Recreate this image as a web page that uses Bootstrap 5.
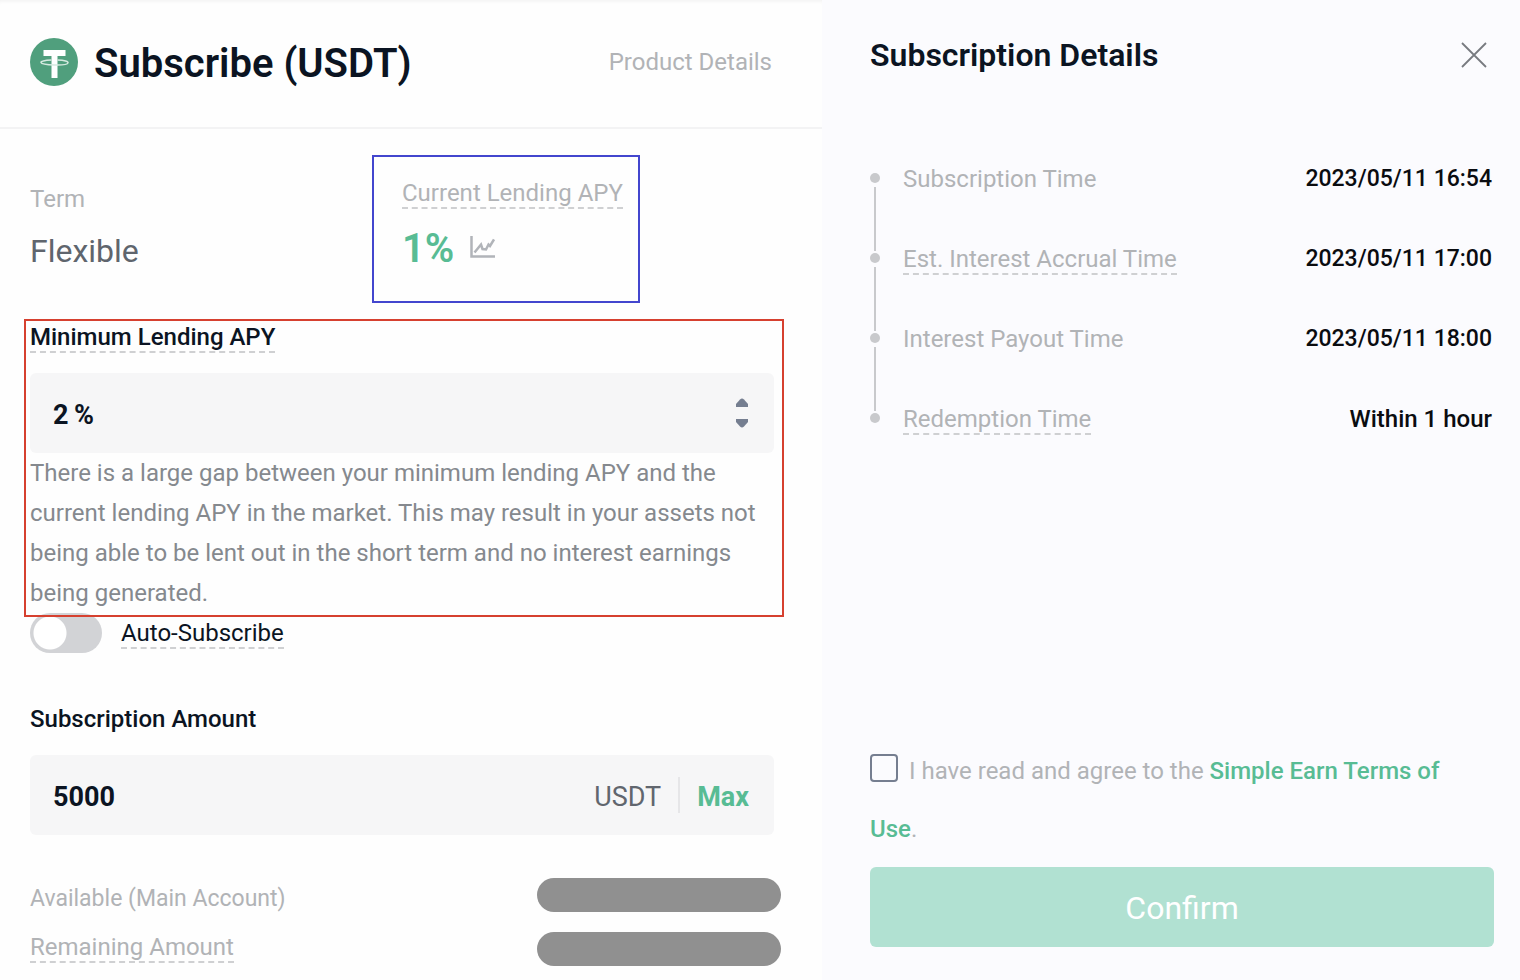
<!DOCTYPE html>
<html lang="en">
<head>
<meta charset="utf-8">
<meta name="viewport" content="width=device-width, initial-scale=1">
<title>Subscribe (USDT)</title>
<link href="https://cdn.jsdelivr.net/npm/bootstrap@5.3.0/dist/css/bootstrap.min.css" rel="stylesheet">
<style>
  :root { --green: #58bc94; --ink: #0b1422; --muted-ink: #b1b3b6; --rule: #c8c9cc; }
  body { font-family: Roboto, "Liberation Sans", sans-serif; font-size: 24px; line-height: 40px; color: var(--ink); background: #fff; }
  a { text-decoration: none; color: inherit; }
  .sheet { display: grid; grid-template-columns: 822fr 698fr; min-height: 100vh; }
  .order { background: #fefefe; box-shadow: inset 0 4px 4px -3px rgba(0,0,0,.06); }
  .details { background: #fbfbfe; padding: 35px 26px 33px 48px; }
  .order-head { height: 129px; padding: 0 50px 4px 30px; border-bottom: 2px solid #f3f3f4; }
  .order-body { padding: 26px 48px 0 30px; }
  .title-lg { font-size: 40px; font-weight: 600; line-height: 48px; padding-top: 4px; }
  .title-md { font-size: 32px; font-weight: 600; }
  .soft { color: var(--muted-ink); }
  .hint { border-bottom: 2px dashed #cfd0d2; }
  .rates { display: grid; grid-template-columns: 342px 268px; }
  .term-cell { padding-top: 24px; }
  .term-value { font-size: 32px; line-height: 40px; color: #5f656d; margin-top: 12px; }
  .apy-cell { border: 2px solid #4346ce; height: 148px; padding: 16px 0 0 28px; }
  .apy-value { font-size: 40px; font-weight: 600; color: var(--green); line-height: 48px; margin-top: 12px; }
  .apy-value svg { margin-bottom: 4px; }
  .min-apy { position: relative; margin-top: 14px; }
  .min-apy::after { content: ""; position: absolute; inset: 2px -10px -4px -6px; border: 2px solid #d6402f; pointer-events: none; z-index: 1; }
  .field-label { font-weight: 500; display: block; }
  .field-box { background: #f6f6f7; border-radius: 6px; height: 80px; padding: 0 25px 0 23px; margin-top: 16px; }
  .field-box input { border: 0; background: transparent; font-size: 27px; font-weight: 700; color: var(--ink); padding: 4px 0 0; min-width: 0; outline: 0; }
  .plain { border: 0; background: transparent; padding: 0; display: block; line-height: 0; }
  .steps { gap: 12px; }
  .warning-text { color: #85898e; }
  .form-switch.auto { padding: 0; margin: 0; min-height: 40px; gap: 19px; }
  .form-switch.auto .form-check-input { width: 72px; height: 40px; margin: 0; float: none; border: 0; background-color: #d2d3d6;
    background-image: radial-gradient(circle at 20px 20px, #fff 16px, transparent 17px); background-position: 0 0; background-size: 100% 100%; }
  .amount { margin-top: 46px; }
  .unit { font-size: 27px; color: #61666e; padding-top: 4px; }
  .split { width: 2px; height: 36px; background: #e6e6e8; margin: 0 17px; }
  .max-btn { font-size: 27px; font-weight: 700; color: var(--green); line-height: 40px; padding-top: 4px; }
  .balances { margin-top: 40px; padding: 0 41px 0 30px; }
  .balances .names { line-height: 48px; }
  .redacted { width: 244px; height: 34px; border-radius: 17px; background: #909090; }
  .bars { padding-top: 3px; gap: 20px; }
  .tight { font-size: 23px; }
  .timeline { margin-top: 98px; }
  .timeline li { min-height: 80px; gap: 23px; }
  .timeline li:last-child { min-height: 26px; }
  .marker { width: 10px; }
  .dot { width: 10px; height: 10px; border-radius: 50%; background: var(--rule); }
  .stem { width: 2px; margin: 4px 0 2px; background: var(--rule); }
  .step-text { margin-top: -14px; }
  .when { font-weight: 500; padding-right: 2px; color: #0a0c10; }
  .agree { line-height: 58px; margin-bottom: 9px; padding-right: 32px; }
  .agree .form-check-input { width: 28px; height: 28px; margin: 0 11px 0 0; border: 2px solid #757e90; border-radius: 4px; background-color: transparent; vertical-align: -3px; }
  .agree a { color: var(--green); font-weight: 500; }
  .confirm, .confirm:disabled { background: #b1e1d2; border: 0; color: #fff; opacity: 1; font-size: 32px; height: 80px; border-radius: 6px; padding-top: 8px; }
</style>
</head>
<body>
<main class="sheet">
  <section class="order">
    <header class="order-head d-flex align-items-center justify-content-between">
      <div class="d-flex align-items-center">
        <svg width="48" height="48" viewBox="0 0 48 48" aria-hidden="true">
          <circle cx="24" cy="24" r="24" fill="#509f7d"/>
          <path d="M13.500 12h22v6h-8v22h-6V18h-8z" fill="#fff"/>
          <path d="M21.500 22C7 22.500 7 26.500 24.500 27S42 22.500 27.500 22" fill="none" stroke="#d5eae0" stroke-width="1.500"/>
        </svg>
        <h1 class="title-lg mb-0 ms-3">Subscribe (USDT)</h1>
      </div>
      <a href="#" class="soft">Product Details</a>
    </header>

    <div class="order-body">
      <div class="rates">
        <div class="term-cell">
          <div class="soft">Term</div>
          <div class="term-value">Flexible</div>
        </div>
        <div class="apy-cell">
          <div><span class="hint soft">Current Lending APY</span></div>
          <div class="apy-value d-flex align-items-center gap-3">1%
            <svg width="25" height="24" viewBox="0 0 25 24" fill="none" stroke="#b1b4b9" stroke-width="2.500" aria-hidden="true"><path d="M1.500 1v20.500H25"/><path d="M4.500 17.500l6.500-8 1.500 4.500 3.500 .5 2.500-5 1.500 1.500L24 4.500"/></svg>
          </div>
        </div>
      </div>

      <div class="min-apy">
        <label class="field-label" for="minApy"><span class="hint">Minimum Lending APY</span></label>
        <div class="field-box d-flex align-items-center">
          <input id="minApy" class="flex-grow-1" type="text" value="2&thinsp;%">
          <div class="steps d-flex flex-column">
            <button class="plain" type="button" aria-label="Increase"><svg width="14" height="10" viewBox="0 0 14 10"><path d="M1 10V7l4-4.500q2-2 4 0L13 7v3z" fill="#757e90"/></svg></button>
            <button class="plain" type="button" aria-label="Decrease"><svg width="14" height="10" viewBox="0 0 14 10"><path d="M1 0v3l4 4.500q2 2 4 0L13 3V0z" fill="#757e90"/></svg></button>
          </div>
        </div>
        <p class="warning-text mb-0">There is a large gap between your minimum lending APY and the current lending APY in the market. This may result in your assets not being able to be lent out in the short term and no interest earnings being generated.</p>
      </div>

      <div class="form-check form-switch auto d-flex align-items-center">
        <input class="form-check-input" type="checkbox" role="switch" id="autoSub">
        <label for="autoSub"><span class="hint">Auto-Subscribe</span></label>
      </div>

      <div class="amount">
        <label class="field-label" for="amount">Subscription Amount</label>
        <div class="field-box d-flex align-items-center">
          <input id="amount" class="flex-grow-1" type="text" value="5000">
          <span class="unit">USDT</span>
          <span class="split"></span>
          <button class="plain max-btn" type="button">Max</button>
        </div>
      </div>
    </div>

    <div class="balances d-flex justify-content-between">
      <div class="names soft">
        <div class="tight">Available (Main Account)</div>
        <div><span class="hint">Remaining Amount</span></div>
      </div>
      <div class="bars d-flex flex-column">
        <div class="redacted"></div>
        <div class="redacted"></div>
      </div>
    </div>
  </section>

  <aside class="details d-flex flex-column">
    <header class="d-flex align-items-center justify-content-between">
      <h2 class="title-md mb-0 lh-sm">Subscription Details</h2>
      <button class="plain me-1" type="button" aria-label="Close"><svg width="32" height="32" viewBox="0 0 32 32" stroke="#777a80" stroke-width="1.800"><path d="M4 4l24 24M28 4L4 28"/></svg></button>
    </header>

    <ol class="timeline list-unstyled mb-0">
      <li class="d-flex">
        <div class="marker d-flex flex-column align-items-center"><span class="dot"></span><span class="stem flex-grow-1"></span></div>
        <div class="step-text flex-grow-1 d-flex justify-content-between"><div class="soft">Subscription Time</div><time class="when tight">2023/05/11 16:54</time></div>
      </li>
      <li class="d-flex">
        <div class="marker d-flex flex-column align-items-center"><span class="dot"></span><span class="stem flex-grow-1"></span></div>
        <div class="step-text flex-grow-1 d-flex justify-content-between"><div class="soft"><span class="hint">Est. Interest Accrual Time</span></div><time class="when tight">2023/05/11 17:00</time></div>
      </li>
      <li class="d-flex">
        <div class="marker d-flex flex-column align-items-center"><span class="dot"></span><span class="stem flex-grow-1"></span></div>
        <div class="step-text flex-grow-1 d-flex justify-content-between"><div class="soft">Interest Payout Time</div><time class="when tight">2023/05/11 18:00</time></div>
      </li>
      <li class="d-flex">
        <div class="marker d-flex flex-column align-items-center"><span class="dot"></span></div>
        <div class="step-text flex-grow-1 d-flex justify-content-between"><div class="soft"><span class="hint">Redemption Time</span></div><span class="when">Within 1 hour</span></div>
      </li>
    </ol>

    <div class="mt-auto">
      <div class="agree soft"><input class="form-check-input" type="checkbox" id="agree"><label class="d-inline" for="agree">I have read and agree to the <a href="#">Simple Earn Terms of Use</a>.</label></div>
      <button class="btn confirm w-100" type="button" disabled>Confirm</button>
    </div>
  </aside>
</main>
<script src="https://cdn.jsdelivr.net/npm/bootstrap@5.3.0/dist/js/bootstrap.bundle.min.js"></script>
</body>
</html>
